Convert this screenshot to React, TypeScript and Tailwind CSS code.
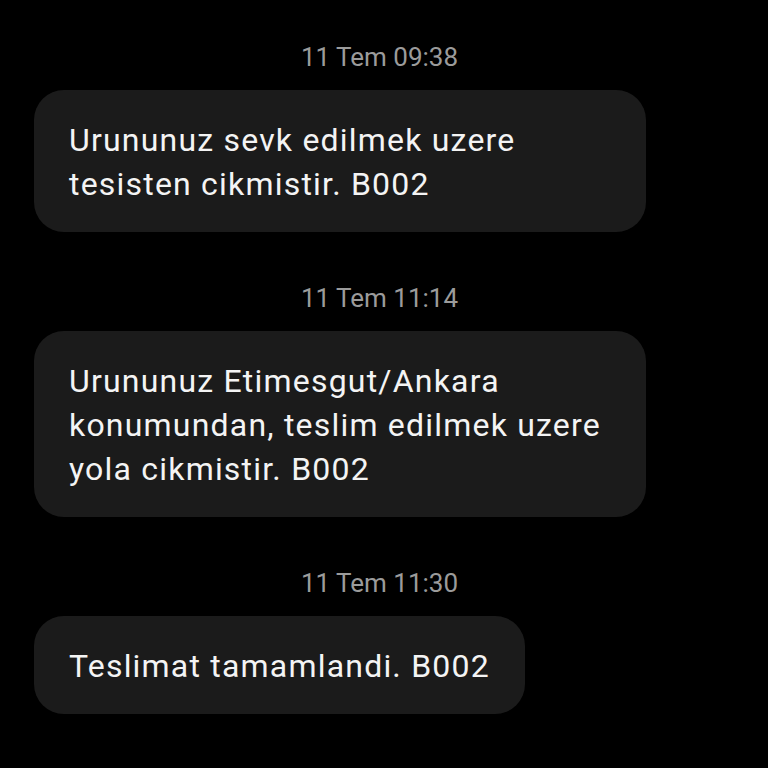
import React from "react";

const messages = [
  { time: "11 Tem 09:38", text: "Urununuz sevk edilmek uzere tesisten cikmistir. B002" },
  { time: "11 Tem 11:14", text: "Urununuz Etimesgut/Ankara konumundan, teslim edilmek uzere yola cikmistir. B002" },
  { time: "11 Tem 11:30", text: "Teslimat tamamlandi. B002" },
];

export default function App() {
  return (
    <div className="w-[768px] h-[768px] bg-black overflow-hidden font-['Roboto',sans-serif]">
      <div className="flex flex-col pt-[41px]">
        {messages.map((m, i) => (
          <div key={i} className="flex flex-col">
            {/* Timestamp */}
            <div className="pr-[9px] text-center text-[26px] leading-[32px] text-[#9b9b9b]">{m.time}</div>
            {/* Bubble */}
            <div className="ml-[34px] mt-[17px] mb-[50px] w-fit max-w-[612px] rounded-[30px] bg-[#1b1b1b] px-[35px] pt-[28px] pb-[26px] text-[32px] leading-[44px] tracking-[1.2px] text-[#f4f4f4]">
              {m.text}
            </div>
          </div>
        ))}
      </div>
    </div>
  );
}
